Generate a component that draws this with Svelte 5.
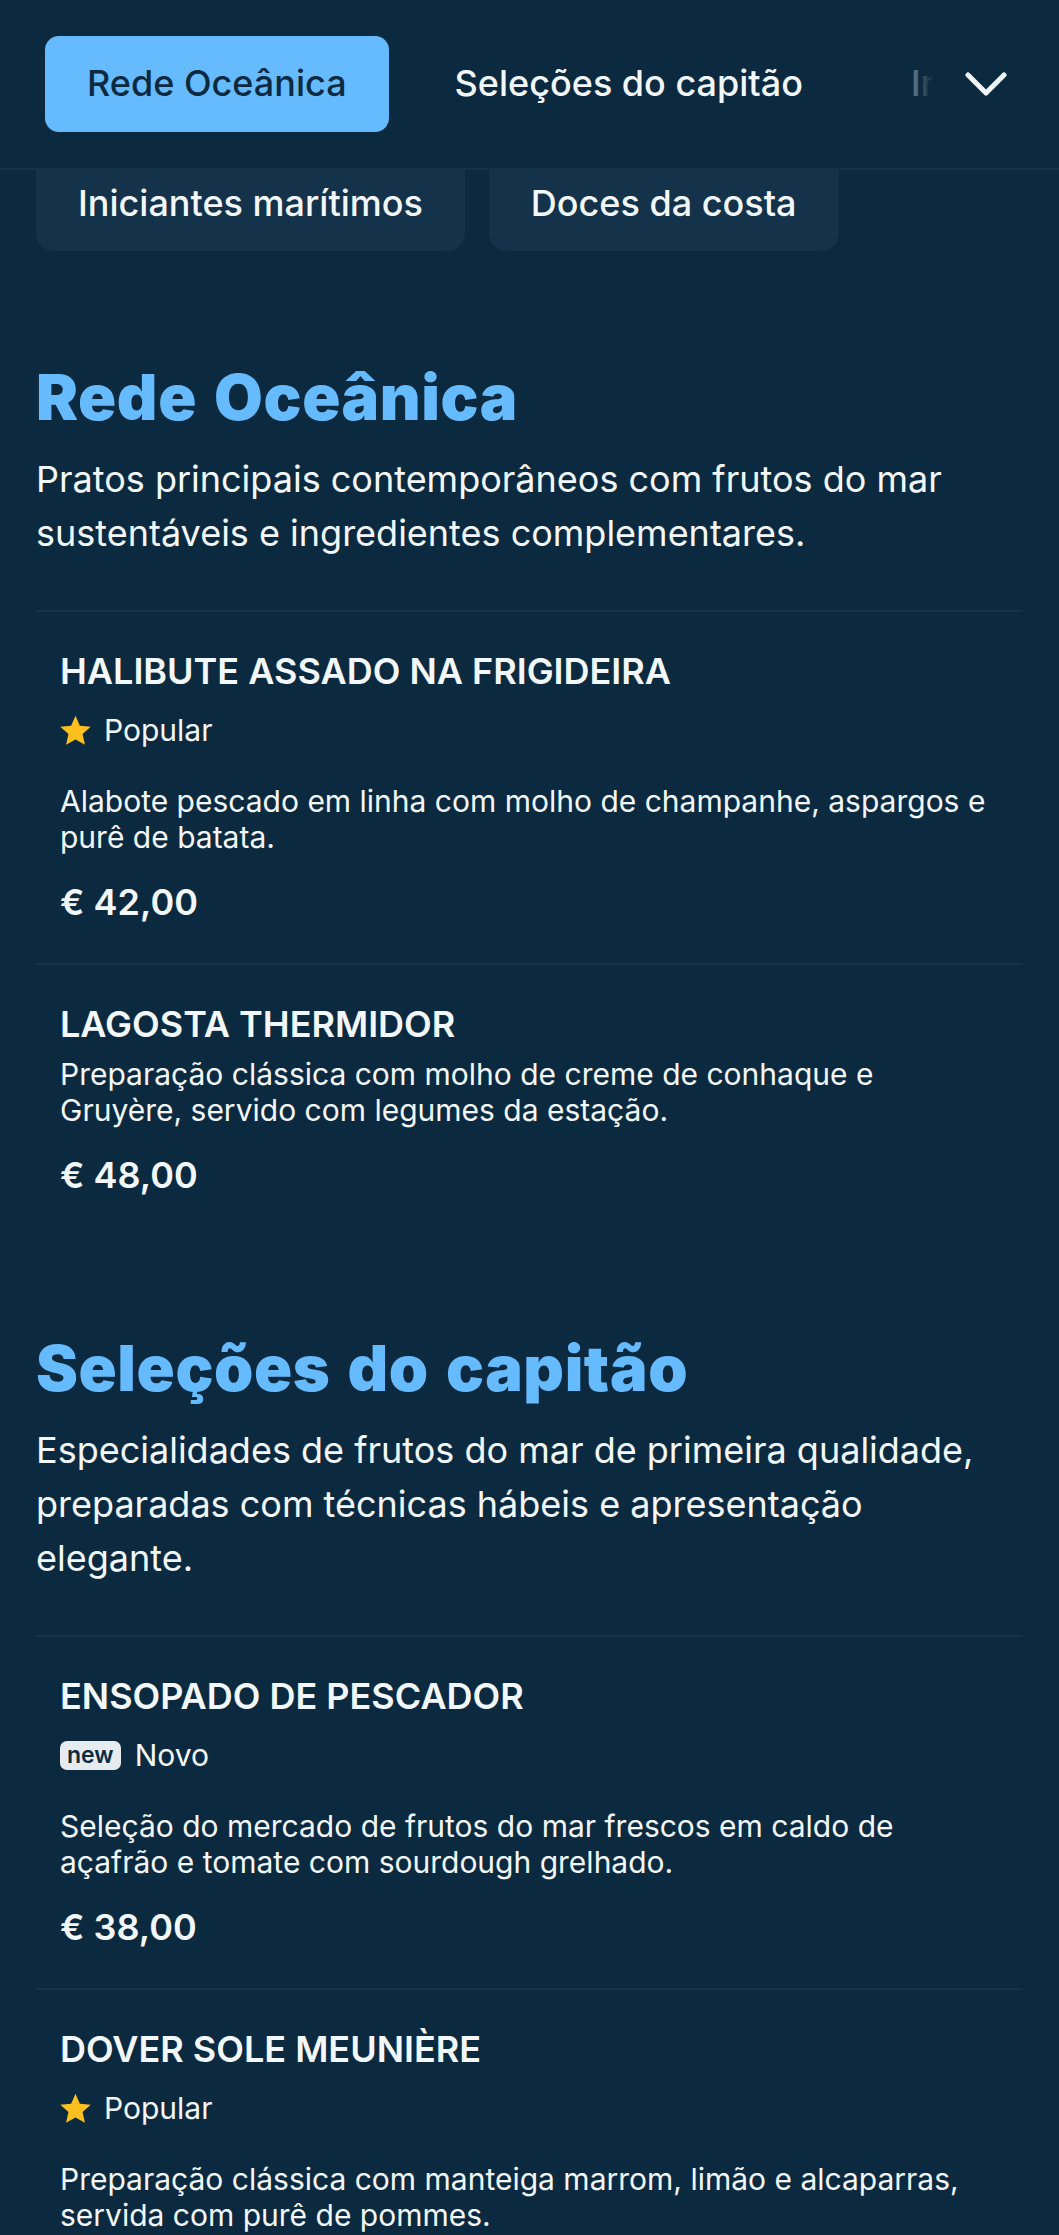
<script>
  const tabs = ['Rede Oceânica', 'Seleções do capitão', 'Iniciantes marítimos'];
  const chips = ['Iniciantes marítimos', 'Doces da costa'];
  const sections = [
    {
      title: 'Rede Oceânica',
      intro: 'Pratos principais contemporâneos com frutos do mar sustentáveis e ingredientes complementares.',
      items: [
        { name: 'HALIBUTE ASSADO NA FRIGIDEIRA', tag: 'popular', desc: 'Alabote pescado em linha com molho de champanhe, aspargos e purê de batata.', price: '€ 42,00' },
        { name: 'LAGOSTA THERMIDOR', desc: 'Preparação clássica com molho de creme de conhaque e Gruyère, servido com legumes da estação.', price: '€ 48,00' }
      ]
    },
    {
      title: 'Seleções do capitão',
      intro: 'Especialidades de frutos do mar de primeira qualidade, preparadas com técnicas hábeis e apresentação elegante.',
      items: [
        { name: 'ENSOPADO DE PESCADOR', tag: 'new', desc: 'Seleção do mercado de frutos do mar frescos em caldo de açafrão e tomate com sourdough grelhado.', price: '€ 38,00' },
        { name: 'DOVER SOLE MEUNIÈRE', tag: 'popular', desc: 'Preparação clássica com manteiga marrom, limão e alcaparras, servida com purê de pommes.', price: '€ 44,00' }
      ]
    }
  ];
</script>

<div class="page">
  <header class="topbar">
    <div class="tabs">
      {#each tabs as tab, i}
        <button class="tab" class:active={i === 0}>{tab}</button>
      {/each}
      <div class="fade"></div>
    </div>
    <button class="more" aria-label="Mais categorias">
      <svg width="42" height="24" viewBox="0 0 42 24" fill="none" stroke="#f3f8fc" stroke-width="5" stroke-linecap="round" stroke-linejoin="round">
        <path d="M3 3 L21 21 L39 3" />
      </svg>
    </button>
  </header>

  <div class="chips">
    {#each chips as chip}
      <span class="chip">{chip}</span>
    {/each}
  </div>

  <main>
    {#each sections as section}
      <section>
        <h2>{section.title}</h2>
        <p class="intro">{section.intro}</p>
        {#each section.items as item}
          <article class="item">
            <h3>{item.name}</h3>
            {#if item.tag === 'popular'}
              <div class="tag">
                <svg class="star" width="31" height="31" viewBox="1 1 22 22"><path fill="#fdc01e" d="M12 1.6l3.1 7.1 7.7.7-5.8 5.1 1.7 7.6L12 18.4l-6.7 3.7L7 14.5 1.2 9.4l7.7-.7z" /></svg>
                <span>Popular</span>
              </div>
            {:else if item.tag === 'new'}
              <div class="tag tag-new">
                <span class="new">new</span>
                <span>Novo</span>
              </div>
            {/if}
            <p class="desc">{item.desc}</p>
            <div class="price">{item.price}</div>
          </article>
        {/each}
      </section>
    {/each}
  </main>
</div>

<style>
  :global(body) {
    margin: 0;
    background: #0c2a3f;
  }

  .page {
    height: 2235px;
    overflow: hidden;
    background: #0c2a3f;
    color: #f3f8fc;
    font-family: Inter, "Liberation Sans", sans-serif;
  }

  .topbar {
    display: flex;
    align-items: flex-start;
    height: 170px;
    box-sizing: border-box;
    padding: 36px 0 0 45px;
    border-bottom: 2px solid #14324a;
  }

  .tabs {
    position: relative;
    display: flex;
    gap: 24px;
    width: 889px;
    overflow: hidden;
    flex-shrink: 0;
  }

  .tab {
    flex-shrink: 0;
    height: 96px;
    padding: 0 42px 2px;
    border: 0;
    border-radius: 14px;
    background: none;
    color: #f3f8fc;
    font: 500 36px Inter, sans-serif;
    white-space: nowrap;
  }

  .tab.active {
    background: #66bbff;
    color: #0c2a3f;
  }

  .fade {
    position: absolute;
    top: 0;
    right: 0;
    bottom: 0;
    width: 26px;
    background: linear-gradient(to right, rgba(12, 42, 63, 0.55), #0c2a3f);
  }

  .more {
    padding: 0;
    margin: 36px 0 0 31px;
    border: 0;
    background: none;
    display: flex;
  }

  .chips {
    display: flex;
    gap: 24px;
    padding-left: 36px;
  }

  .chip {
    height: 81px;
    line-height: 66px;
    padding: 0 42px;
    background: #14324a;
    border-radius: 0 0 18px 18px;
    font-size: 36px;
    font-weight: 500;
  }

  main {
    padding: 0 36px;
  }

  section {
    padding-top: 108px;
  }

  section + section {
    padding-top: 94px;
  }

  h2 {
    margin: 0;
    color: #66bbff;
    font-size: 63px;
    font-weight: 900;
    letter-spacing: 0.6px;
    word-spacing: 4px;
    line-height: 76px;
  }

  .intro {
    margin: 17px 0 0;
    font-size: 36px;
    line-height: 54px;
  }

  .item {
    padding: 37px 24px 39px;
    border-top: 2px solid #14324a;
  }

  .intro + .item {
    margin-top: 50px;
  }

  h3 {
    margin: 0;
    font-size: 36px;
    font-weight: 600;
    line-height: 44px;
  }

  .tag {
    display: flex;
    align-items: center;
    gap: 13px;
    margin-top: 15px;
    font-size: 30px;
    line-height: 44px;
  }

  .tag-new {
    gap: 14px;
  }

  .new {
    padding: 0 7px;
    border-radius: 7px;
    background: #e6ebf0;
    color: #0c2a3f;
    font-size: 23px;
    font-weight: 600;
    line-height: 29px;
  }

  .desc {
    margin: 31px 0 0;
    font-size: 30px;
    line-height: 36px;
  }

  h3 + .desc {
    margin-top: 10px;
  }

  .price {
    margin-top: 25px;
    font-size: 36px;
    font-weight: 600;
    line-height: 44px;
  }
</style>
